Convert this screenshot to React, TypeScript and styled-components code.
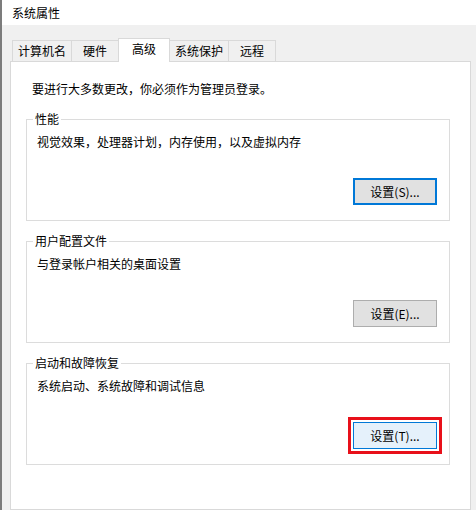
import styled, { createGlobalStyle } from "styled-components";

const GlobalStyle = createGlobalStyle`
	html, body {
		margin: 0;
		padding: 0;
		background: #f0f0f0;
	}
`;

const FONT = `"Noto Sans CJK SC", "Microsoft YaHei", sans-serif`;

const Window = styled.div`
	width: 476px;
	height: 510px;
	box-sizing: border-box;
	border-left: 2px solid #7c7c7c;
	background: #f0f0f0;
	display: flex;
	flex-direction: column;
	overflow: hidden;
	font-family: ${FONT};
	font-size: 12px;
	color: #000;
`;

const TitleBar = styled.div`
	flex-shrink: 0;
	height: 25px;
	line-height: 25px;
	padding-left: 10px;
	background: #fff;
`;

const Body = styled.div`
	flex: 1;
	min-height: 0;
	display: flex;
	flex-direction: column;
	padding: 13px 5px 0 8px;
`;

const TabStrip = styled.div`
	display: flex;
	align-items: flex-end;
	height: 24px;
	padding-left: 2px;
	margin-bottom: -1px;
`;

interface TabProps {
	$active?: boolean;
}

const Tab = styled.div<TabProps>`
	box-sizing: border-box;
	min-width: ${(props) => (props.$active ? 52 : 48)}px;
	height: ${(props) => (props.$active ? 24 : 21)}px;
	margin-bottom: ${(props) => (props.$active ? 0 : 1)}px;
	margin-left: -1px;
	padding: 0 5px;
	border: 1px solid #d9d9d9;
	border-bottom: none;
	background: ${(props) => (props.$active ? "#fff" : "#f0f0f0")};
	line-height: 19px;
	text-align: center;
	position: relative;
	z-index: ${(props) => (props.$active ? 1 : 0)};

	&:first-child {
		margin-left: 0;
	}
`;

const Panel = styled.div`
	flex: 1;
	width: 461px;
	box-sizing: border-box;
	background: #fff;
	border: 1px solid #d9d9d9;
	padding: 19px 20px 0 15px;
`;

const Intro = styled.p`
	margin: 0 0 15px 6px;
	line-height: 16px;
`;

const Group = styled.fieldset`
	margin: 0;
	min-width: 0;
	border: 1px solid #dcdcdc;
	padding: 8px 12px 15px 6px;

	& + & {
		margin-top: 13px;
	}
`;

const Legend = styled.legend`
	padding: 0 2px;
	line-height: 14px;
	font-size: 12px;
`;

const Description = styled.div`
	margin-left: 4px;
	line-height: 16px;
`;

const ButtonRow = styled.div`
	display: flex;
	justify-content: flex-end;
	margin-top: 28px;
`;

type ButtonState = "default" | "normal" | "hover";

interface SettingsButtonProps {
	$state: ButtonState;
	$marked?: boolean;
}

const buttonLook: Record<ButtonState, string> = {
	default: "background: #e1e1e1; border: 2px solid #0078d7;",
	normal: "background: #e1e1e1; border: 1px solid #adadad;",
	hover: "background: #e5f1fb; border: 1px solid #0078d7;",
};

const SettingsButton = styled.button<SettingsButtonProps>`
	box-sizing: border-box;
	width: 84px;
	height: 27px;
	padding: 0;
	font-family: ${FONT};
	font-size: 12px;
	color: #000;
	${(props) => buttonLook[props.$state]}
	outline: ${(props) => (props.$marked ? "3px solid #e8101a" : "none")};
	outline-offset: 2px;
`;

const tabs = ["计算机名", "硬件", "高级", "系统保护", "远程"];

interface SectionInfo {
	title: string;
	text: string;
	button: string;
	state: ButtonState;
	marked?: boolean;
}

const sections: SectionInfo[] = [
	{
		title: "性能",
		text: "视觉效果，处理器计划，内存使用，以及虚拟内存",
		button: "设置(S)...",
		state: "default",
	},
	{
		title: "用户配置文件",
		text: "与登录帐户相关的桌面设置",
		button: "设置(E)...",
		state: "normal",
	},
	{
		title: "启动和故障恢复",
		text: "系统启动、系统故障和调试信息",
		button: "设置(T)...",
		state: "hover",
		marked: true,
	},
];

function App() {
	return (
		<>
			<GlobalStyle />
			<Window>
				<TitleBar>系统属性</TitleBar>
				<Body>
					<TabStrip>
						{tabs.map((tab) => (
							<Tab key={tab} $active={tab === "高级"}>
								{tab}
							</Tab>
						))}
					</TabStrip>
					<Panel>
						<Intro>要进行大多数更改，你必须作为管理员登录。</Intro>
						{sections.map((section) => (
							<Group key={section.title}>
								<Legend>{section.title}</Legend>
								<Description>{section.text}</Description>
								<ButtonRow>
									<SettingsButton
										$state={section.state}
										$marked={section.marked}
									>
										{section.button}
									</SettingsButton>
								</ButtonRow>
							</Group>
						))}
					</Panel>
				</Body>
			</Window>
		</>
	);
}

export default App;
